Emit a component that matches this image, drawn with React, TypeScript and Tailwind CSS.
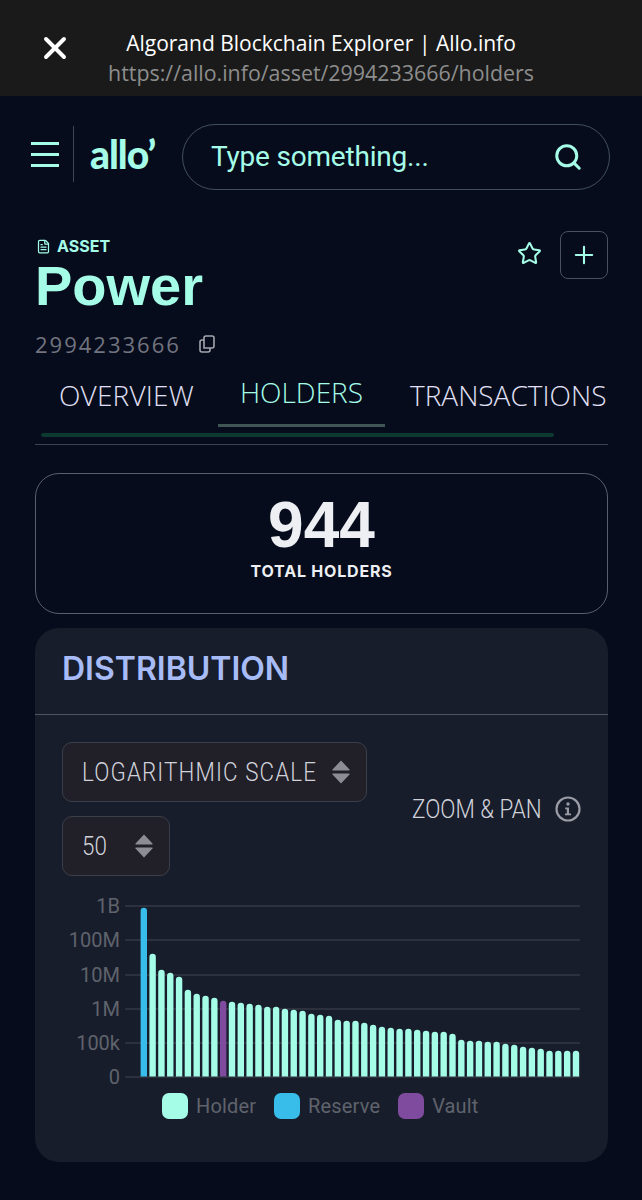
import { Search, X, Star, Plus, FileText } from "lucide-react";

const tops = [
  908, 954, 970, 973, 977, 990, 994, 996, 998, 1001, 1002, 1003, 1004, 1005, 1007, 1007, 1009, 1010, 1011, 1014, 1015,
  1016, 1020, 1021, 1021, 1023, 1025, 1027, 1028, 1029, 1029, 1030, 1031, 1032, 1032, 1034, 1040, 1041, 1041, 1042,
  1042, 1044, 1045, 1047, 1048, 1049, 1051, 1051, 1051, 1051,
];

const ticks = [
  { label: "1B", y: 906 },
  { label: "100M", y: 940 },
  { label: "10M", y: 975 },
  { label: "1M", y: 1009 },
  { label: "100k", y: 1043 },
  { label: "0", y: 1077 },
];

const legend = [
  { label: "Holder", swatch: "bg-[#a5fde8]" },
  { label: "Reserve", swatch: "bg-[#38bdea]" },
  { label: "Vault", swatch: "bg-[#7f4b9e]" },
];

function barColor(i: number) {
  if (i === 0) return "#38bdea";
  if (i === 9) return "#7f4b9e";
  return "#a5fde8";
}

function Chart() {
  return (
    <svg width="526" height="196" viewBox="62 895 526 196" className="block">
      {ticks.map((t) => (
        <g key={t.label}>
          <line x1="125" x2="580" y1={t.y} y2={t.y} stroke="#333845" strokeWidth="1.5" />
          <text x="120" y={t.y + 7} textAnchor="end" fontSize="20" fill="#5f636b" fontFamily="Roboto, sans-serif">
            {t.label}
          </text>
        </g>
      ))}
      {tops.map((top, i) => {
        const x = 140.6 + i * 8.82;
        return (
          <path
            key={i}
            d={`M${x} 1076.5V${top + 3}a3.2 3.2 0 0 1 6.4 0V1076.5Z`}
            fill={barColor(i)}
          />
        );
      })}
    </svg>
  );
}

function Stepper() {
  return (
    <svg width="18" height="24" viewBox="0 0 18 24" fill="#8c8d94" className="shrink-0">
      <path d="M9 0.5 17.5 9.5Q18 10.5 17 10.5H1Q0 10.5 0.5 9.5Z" />
      <path d="M9 23.5 17.5 14.5Q18 13.5 17 13.5H1Q0 13.5 0.5 14.5Z" />
    </svg>
  );
}

function CopyIcon() {
  return (
    <svg width="16" height="18" viewBox="0 0 16 18" fill="none" stroke="#a3a5ad" strokeWidth="1.6">
      <path d="M5 13V3a2 2 0 0 1 2-2h6a2 2 0 0 1 2 2v8a2 2 0 0 1-2 2Z" />
      <path d="M5 5H3a2 2 0 0 0-2 2v8a2 2 0 0 0 2 2h6a2 2 0 0 0 2-2v-2" />
    </svg>
  );
}

function InfoIcon() {
  return (
    <svg width="26" height="26" viewBox="0 0 26 26" fill="none" className="shrink-0">
      <circle cx="13" cy="13" r="11.5" stroke="#9a9ca5" strokeWidth="2.2" />
      <circle cx="13" cy="8" r="1.7" fill="#9a9ca5" />
      <path d="M10.2 11.5H14V17.5H16V19.2H10V17.5H11.8V13.2H10.2Z" fill="#9a9ca5" />
    </svg>
  );
}

export default function App() {
  return (
    <div className="w-[642px] h-[1200px] overflow-hidden bg-[#060c1c]" style={{ fontFamily: "Inter, sans-serif" }}>
      {/* browser bar */}
      <div className="h-24 bg-[#1a1a1a] flex items-center">
        <X className="ml-[37px] w-9 h-9 text-white shrink-0" strokeWidth={2.6} />
        <div className="ml-[8px] w-[480px] text-center pt-5 whitespace-nowrap">
          <div className="text-[21px] leading-[30px] font-medium text-white font-['Open_Sans',sans-serif]">
            Algorand Blockchain Explorer | Allo.info
          </div>
          <div className="text-[21.4px] leading-[30px] text-[#8d8d8d] font-['Open_Sans',sans-serif]">
            https://allo.info/asset/2994233666/holders
          </div>
        </div>
      </div>

      <div className="pl-[35px] pr-[34px]">
        {/* nav */}
        <div className="flex items-center mt-7 -ml-1 h-[66px] -mr-[2px]">
          <div className="w-7 flex flex-col gap-[8px] -mt-[6px]">
            <div className="h-[3px] bg-[#a5fde8]" />
            <div className="h-[3px] bg-[#a5fde8]" />
            <div className="h-[3px] bg-[#a5fde8]" />
          </div>
          <div className="ml-[14px] w-px h-[56px] bg-[#3d4653] -mt-[6px]" />
          <div className="ml-4 w-[92px] text-[39px] font-black leading-none tracking-[-1px] text-[#a5fde8] font-['Lato',sans-serif] -mt-[6px] whitespace-nowrap">
            allo’
          </div>
          <div className="flex-1 h-[66px] rounded-[33px] border border-[#41505c] flex items-center justify-between pl-[28px] pr-[26px]">
            <span className="text-[28px] text-[#a5fde8] font-['Roboto',sans-serif] tracking-[-0.2px]">Type something...</span>
            <Search className="w-[30px] h-[30px] text-[#a5fde8]" strokeWidth={2.4} />
          </div>
        </div>

        {/* asset header */}
        <div className="flex justify-between mt-[41px]">
          <div>
            <div className="flex items-center gap-[6px] h-[30px] pl-px">
              <FileText className="w-[15px] h-[15px] text-[#a5fde8]" strokeWidth={2} />
              <span className="text-[16px] font-bold text-[#a5fde8]">ASSET</span>
            </div>
            <div className="text-[56px] leading-[50px] font-bold text-[#a5fde8] font-['Liberation_Sans',sans-serif]">Power</div>
          </div>
          <div className="flex items-center gap-[18px] h-12">
            <Star className="w-[25px] h-[25px] text-[#a5fde8] mb-1" strokeWidth={2} />
            <div className="w-12 h-12 rounded-lg border border-[#47525e] flex items-center justify-center">
              <Plus className="w-7 h-7 text-[#a5fde8]" strokeWidth={1.8} />
            </div>
          </div>
        </div>

        <div className="flex items-center gap-[18px] mt-[18px] h-[30px]">
          <span className="text-[22px] tracking-[2px] text-[#72747f] font-['Open_Sans',sans-serif]">2994233666</span>
          <CopyIcon />
        </div>

        {/* tabs */}
        <div className="flex h-[61px] mt-[7px] whitespace-nowrap font-['Open_Sans',sans-serif] text-[28px] font-light">
          <div className="pl-6 w-[183px] pt-[8px] text-[#e1e0f6] tracking-[0.2px]">OVERVIEW</div>
          <div className="w-[167px] text-center text-[#a5fde8] border-b-[3px] border-[#3f5654] pt-[5px]">HOLDERS</div>
          <div className="pl-[25px] pt-[8px] text-[#e1e0f6]">TRANSACTIONS</div>
        </div>
        <div className="ml-[6px] w-[513px] h-1 bg-[#0c3a30] rounded-sm mt-[6px]" />
        <div className="h-px bg-[#3c4450] mt-[7px]" />

        {/* total holders */}
        <div className="mt-7 h-[141px] rounded-3xl border border-[#56606b] flex flex-col items-center justify-center pb-2">
          <div className="text-[64px] leading-[56px] font-bold text-[#eeeff3] font-['Liberation_Sans',sans-serif]">944</div>
          <div className="mt-[6px] text-[16px] font-bold text-[#eeeff3] tracking-[0.8px]">TOTAL HOLDERS</div>
        </div>

        {/* distribution */}
        <div className="mt-[14px] h-[534px] rounded-3xl bg-[#181d2b]">
          <div className="h-[87px] border-b border-[#4f555c] pl-[27px] pb-1 flex items-center">
            <span className="text-[32px] font-semibold text-[#a7bcf7]">DISTRIBUTION</span>
          </div>
          <div className="flex justify-between pl-[27px] pr-[27px] pt-[27px]">
            <div className="flex flex-col gap-[14px] items-start">
              <div className="w-[305px] h-[60px] rounded-[10px] border border-[#3b3f49] bg-[#211f28] flex items-center justify-between pl-[19px] pr-[16px]">
                <span className="w-[250px] origin-left scale-x-[0.86] text-[26px] font-light text-[#d0d2da] font-['Roboto',sans-serif] tracking-[1.3px] whitespace-nowrap">
                  LOGARITHMIC SCALE
                </span>
                <Stepper />
              </div>
              <div className="w-[108px] h-[60px] rounded-[10px] border border-[#3b3f49] bg-[#211f28] flex items-center justify-between pl-[19px] pr-[16px]">
                <span className="origin-left scale-x-[0.86] text-[26px] font-light text-[#d0d2da] font-['Roboto',sans-serif]">50</span>
                <Stepper />
              </div>
            </div>
            <div className="flex items-center gap-[13px] self-center">
              <span className="origin-right scale-x-[0.86] text-[26px] font-light text-[#d0d2da] font-['Roboto',sans-serif] whitespace-nowrap">
                ZOOM &amp; PAN
              </span>
              <InfoIcon />
            </div>
          </div>
          <div className="mt-[19px] ml-[27px]">
            <Chart />
          </div>
          <div className="flex items-center ml-[127px] mt-0 gap-[18px]">
            {legend.map((l) => (
              <div key={l.label} className="flex items-center gap-2">
                <div className={`w-[26px] h-[26px] rounded-[7px] ${l.swatch}`} />
                <span className="text-[20px] tracking-[0.15px] text-[#5f636b] font-['Roboto',sans-serif]">{l.label}</span>
              </div>
            ))}
          </div>
        </div>
      </div>
    </div>
  );
}
